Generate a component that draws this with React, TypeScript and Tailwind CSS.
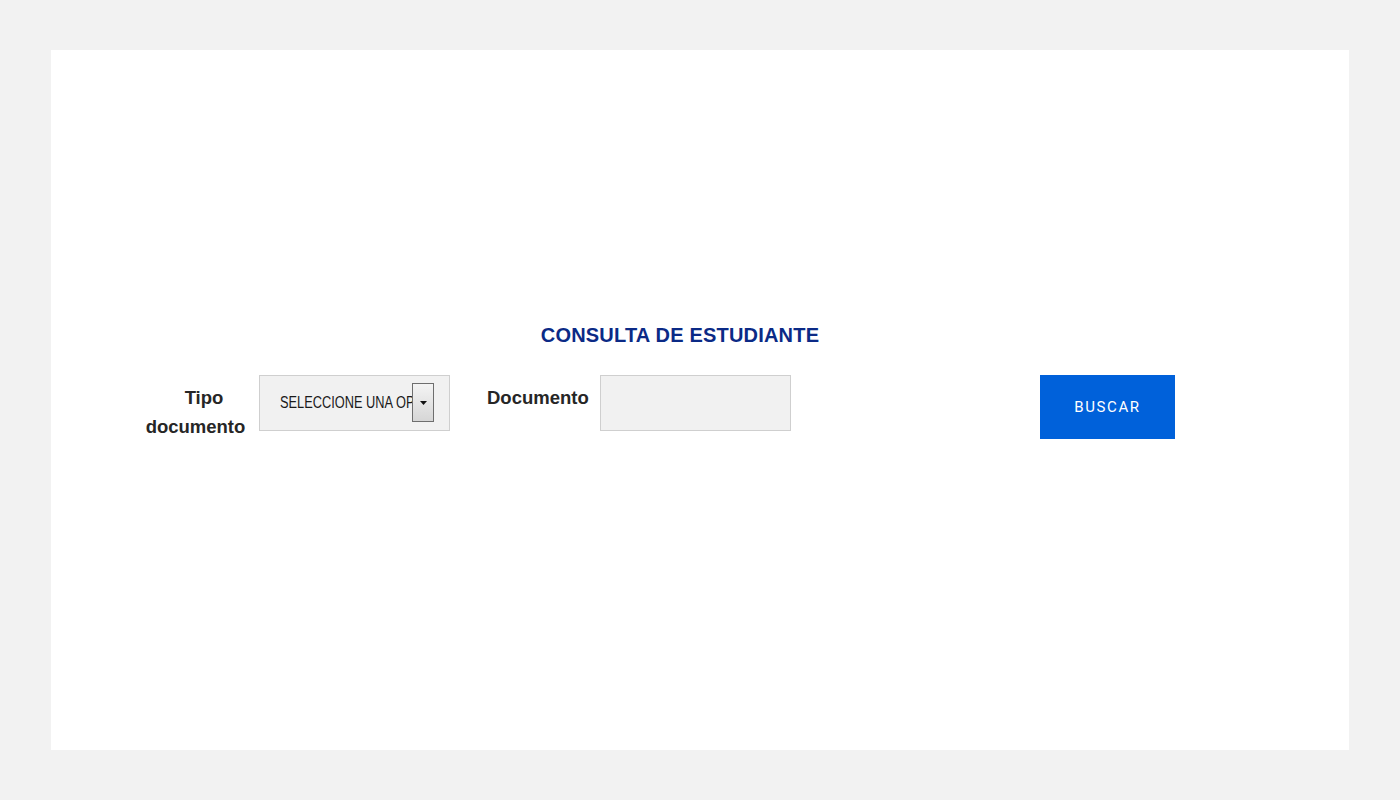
import React from "react";

export default function App() {
  return (
    <div className="min-h-[800px] w-full bg-[#f2f2f2] pt-[50px] pb-[50px] px-[51px]">
      <div className="h-[700px] w-full bg-white flex flex-col">
        <div className="pt-[272px] pr-[40px] text-center">
          <h1
            className="text-[20px] font-bold text-[#0b2a86] leading-[26px] tracking-[0.2px]"
            style={{ fontFamily: '"Liberation Sans", Arial, sans-serif' }}
          >
            CONSULTA DE ESTUDIANTE
          </h1>
        </div>
        <div
          className="flex items-start mt-[27px] pl-[89px]"
          style={{ fontFamily: '"Liberation Sans", Arial, sans-serif' }}
        >
          <div className="w-[111px] pt-[8px] text-center text-[18.5px] font-bold leading-[29px] text-[#262626]">
            <div className="pl-[17px]">Tipo</div>
            <div>documento</div>
          </div>
          <div className="relative ml-[8px] h-[56px] w-[191px] border border-[#cfcfcf] bg-[#f1f1f1]">
            <div className="absolute left-[20px] top-0 h-full w-[132px] overflow-hidden whitespace-nowrap flex items-center">
              <span className="inline-block origin-left scale-x-[0.8] text-[16px] text-[#1a1a1a] leading-none">
                SELECCIONE UNA OPCIÓN
              </span>
            </div>
            <div className="absolute left-[152px] top-[7px] h-[39px] w-[22px] border border-[#6e6e6e] bg-gradient-to-b from-[#f4f4f4] to-[#d6d6d6] flex items-center justify-center">
              <svg width="7" height="4" viewBox="0 0 7 4">
                <path d="M0 0 L7 0 L3.5 4 Z" fill="#111" />
              </svg>
            </div>
          </div>
          <div className="ml-[37px] w-[101px] pt-[8px] text-[18.5px] font-bold leading-[29px] text-[#262626]">
            Documento
          </div>
          <div className="ml-[12px] h-[56px] w-[191px] border border-[#cfcfcf] bg-[#f1f1f1]" />
          <button
            className="ml-[249px] h-[64px] w-[135px] bg-[#0061da] text-white text-[15px] tracking-[1.6px]"
            style={{ fontFamily: 'Roboto, "Liberation Sans", sans-serif' }}
          >
            BUSCAR
          </button>
        </div>
      </div>
    </div>
  );
}
